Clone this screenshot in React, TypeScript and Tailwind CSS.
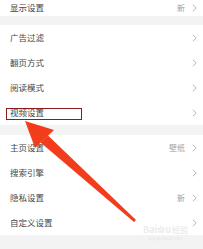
import React from "react";

type Row = { label: string; extra?: string };

const GROUP_A: Row[] = [
  { label: "广告过滤" },
  { label: "翻页方式" },
  { label: "阅读模式" },
  { label: "视频设置" },
];

const GROUP_B: Row[] = [
  { label: "主页设置", extra: "壁纸" },
  { label: "搜索引擎" },
  { label: "隐私设置", extra: "新" },
  { label: "自定义设置" },
];

const Chevron = () => (
  <svg width="5" height="8" viewBox="0 0 5 8" className="shrink-0">
    <path d="M0.8 0.8 L4.2 4 L0.8 7.2" fill="none" stroke="#b0b0b0" strokeWidth="0.9" />
  </svg>
);

const SettingRow = ({ label, extra, h = "h-[25px]" }: Row & { h?: string }) => (
  <div className={`flex items-center justify-between pl-[10px] pr-[6px] bg-white ${h}`}>
    <span className="text-[8.5px] leading-none text-[#474747]">{label}</span>
    <div className="flex items-center gap-[7px]">
      {extra && <span className="text-[8px] leading-none text-[#a0a0a0]">{extra}</span>}
      <Chevron />
    </div>
  </div>
);

const Arrow = () => (
  <svg className="absolute inset-0 pointer-events-none" width="203" height="249" viewBox="0 0 203 249">
    <polygon points="25,121 54,130 35,148" fill="#f23d1d" />
    <polygon points="48,135.5 40.5,142.5 134,222 136,220" fill="#f23d1d" />
  </svg>
);

const Watermark = () => (
  <div className="absolute left-[143px] top-[225px] flex flex-col items-center opacity-40 pointer-events-none">
    <div className="flex items-end text-[9px] leading-none text-[#d0d0d0] font-bold">
      <span>Bai</span>
      <span className="text-[8px]">✿</span>
      <span>u</span>
      <span className="ml-[1px] text-[8px]">经验</span>
    </div>
    <span className="text-[4px] leading-none text-[#d8d8d8] mt-[2px]">jingyan.baidu.com</span>
  </div>
);

export default function App() {
  return (
    <div
      className="relative w-[203px] h-[249px] overflow-hidden bg-[#f3f3f3]"
      style={{ fontFamily: '"Noto Sans CJK SC", "Noto Sans", sans-serif' }}
    >
      <div className="flex flex-col">
        <div className="flex items-center justify-between pl-[10px] pr-[6px] pb-[1px] bg-white h-[16px]">
          <span className="text-[8.5px] leading-none text-[#474747]">显示设置</span>
          <div className="flex items-center gap-[7px]">
            <span className="text-[8px] leading-none text-[#a0a0a0]">新</span>
            <Chevron />
          </div>
        </div>
        <div className="h-[9px]" />
        {GROUP_A.map((r) => (
          <SettingRow key={r.label} {...r} />
        ))}
        <div className="h-[10px]" />
        {GROUP_B.map((r) => (
          <SettingRow key={r.label} {...r} />
        ))}
      </div>
      <div className="absolute left-[6px] top-[108px] w-[76px] h-[12px] border border-[#8a1c1c]" />
      <Arrow />
      <Watermark />
    </div>
  );
}
